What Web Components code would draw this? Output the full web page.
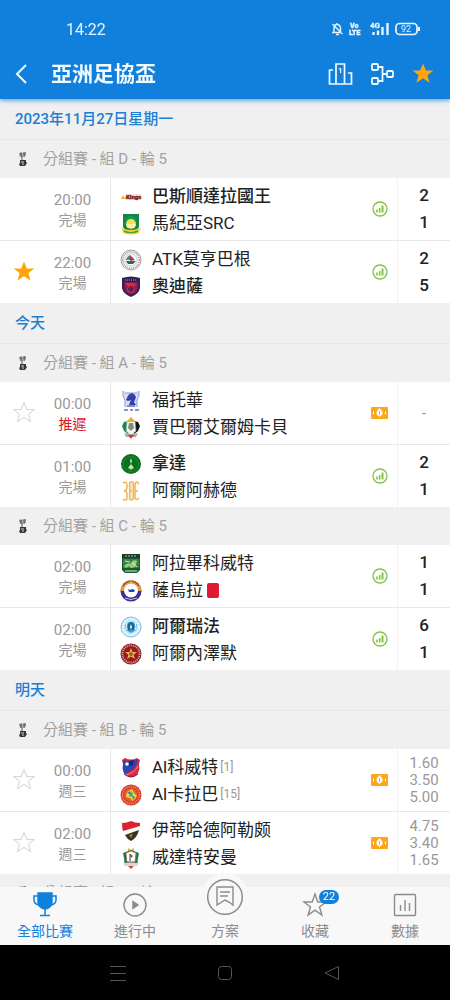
<!DOCTYPE html>
<html lang="zh-Hant">
<head>
<meta charset="utf-8">
<meta name="viewport" content="width=device-width, initial-scale=1">
<title>亞洲足協盃</title>
<style>
  html, body { height: 100%; }
  body {
    margin: 0;
    background: #000;
    font-family: Roboto, "Noto Sans CJK TC", sans-serif;
    --brand-color: #1180dc;
    --surface-color: #f0f0f0;
    --line-color: #e8e8e8;
    --text-color: #222;
    --muted-color: #999;
    --star-color: #ffa40d;
  }
</style>
</head>
<body>
<cup-app>
  <status-bar slot="top" time="14:22" battery="92"></status-bar>
  <page-header slot="top">亞洲足協盃</page-header>

  <date-heading>2023年11月27日星期一</date-heading>
  <group-heading>分組賽 - 組 D - 輪 5</group-heading>
  <match-row time="20:00" state="完場" icon="stats">
    <team-line crest="kings" winner>巴斯順達拉國王</team-line>
    <team-line crest="maziya">馬紀亞SRC</team-line>
    <score-line slot="score">2</score-line>
    <score-line slot="score">1</score-line>
  </match-row>
  <match-row time="22:00" state="完場" icon="stats" star="on">
    <team-line crest="bagan">ATK莫亨巴根</team-line>
    <team-line crest="odisha" winner>奧迪薩</team-line>
    <score-line slot="score">2</score-line>
    <score-line slot="score">5</score-line>
  </match-row>

  <date-heading>今天</date-heading>
  <group-heading>分組賽 - 組 A - 輪 5</group-heading>
  <match-row time="00:00" state="推遲" icon="ticket" star="off" late>
    <team-line crest="fotouh">福托華</team-line>
    <team-line crest="jabal">賈巴爾艾爾姆卡貝</team-line>
    <score-line slot="score" kind="none">-</score-line>
  </match-row>
  <match-row time="01:00" state="完場" icon="stats">
    <team-line crest="nahda" winner>拿達</team-line>
    <team-line crest="ahed">阿爾阿赫德</team-line>
    <score-line slot="score">2</score-line>
    <score-line slot="score">1</score-line>
  </match-row>

  <group-heading>分組賽 - 組 C - 輪 5</group-heading>
  <match-row time="02:00" state="完場" icon="stats">
    <team-line crest="arabi">阿拉畢科威特</team-line>
    <team-line crest="zawraa" red-card>薩烏拉</team-line>
    <score-line slot="score">1</score-line>
    <score-line slot="score">1</score-line>
  </match-row>
  <match-row time="02:00" state="完場" icon="stats">
    <team-line crest="riffa" winner>阿爾瑞法</team-line>
    <team-line crest="nejmeh">阿爾內澤默</team-line>
    <score-line slot="score">6</score-line>
    <score-line slot="score">1</score-line>
  </match-row>

  <date-heading>明天</date-heading>
  <group-heading>分組賽 - 組 B - 輪 5</group-heading>
  <match-row time="00:00" state="週三" icon="ticket" star="off">
    <team-line crest="kuwait" rank="1">Al科威特</team-line>
    <team-line crest="kahrabaa" rank="15">Al卡拉巴</team-line>
    <score-line slot="score" kind="odds">1.60</score-line>
    <score-line slot="score" kind="odds">3.50</score-line>
    <score-line slot="score" kind="odds">5.00</score-line>
  </match-row>
  <match-row time="02:00" state="週三" icon="ticket" star="off">
    <team-line crest="ittihad">伊蒂哈德阿勒颇</team-line>
    <team-line crest="wehdat">威達特安曼</team-line>
    <score-line slot="score" kind="odds">4.75</score-line>
    <score-line slot="score" kind="odds">3.40</score-line>
    <score-line slot="score" kind="odds">1.65</score-line>
  </match-row>
  <group-heading>分組賽 - 組 A - 輪 5</group-heading>

  <tab-bar slot="bottom">
    <tab-item icon="cup" active>全部比賽</tab-item>
    <tab-item icon="play">進行中</tab-item>
    <tab-item icon="plan" raised>方案</tab-item>
    <tab-item icon="star" badge="22">收藏</tab-item>
    <tab-item icon="data">數據</tab-item>
  </tab-bar>
  <system-nav slot="bottom"></system-nav>
</cup-app>

<script>
const STAR_PATH = 'M12 1.6l2.9 7h7.5l-6 4.7 2.2 7.5L12 16.3l-6.6 4.5 2.2-7.5-6-4.7h7.5z';

// 22x22 club crests
const CRESTS = {
  kings: `
    <path d="M1 13l2-4 2 4zM4 13l2-3 1 3z" fill="#f2b233"/>
    <rect x="7" y="8" width="14" height="6" fill="#f6e4dc"/>
    <text x="6" y="13" font-size="6" font-weight="900" font-family="Roboto" fill="#7b1c1c" stroke="#7b1c1c" stroke-width=".3">Kings</text>`,
  maziya: `
    <path d="M3 1h16v13l-3 4H6l-3-4z" fill="#16834a"/>
    <path d="M5 6l3-2 3-2 3 2 3 2-1 4H6z" fill="#0f9b52"/>
    <circle cx="11" cy="11" r="5" fill="#f3e04d"/>
    <path d="M6 12h10M7 14h8" stroke="#fff" stroke-width="1"/>
    <path d="M1 14c5 4 15 4 20 0l-2 6c-5 2-11 2-16 0z" fill="#f1d63c"/>
    <path d="M4 18c4 2 10 2 14 0" stroke="#4a9a3f" stroke-width="1.4" fill="none"/>`,
  bagan: `
    <circle cx="11" cy="11" r="10" fill="#f7f3f3" stroke="#aaa1a6" stroke-width="1"/>
    <circle cx="11" cy="11" r="8.2" fill="none" stroke="#bb8e98" stroke-width="1.6" stroke-dasharray="1 1"/>
    <circle cx="11" cy="11" r="6" fill="#fff" stroke="#9dbfb7" stroke-width=".6"/>
    <path d="M6 12h10l-3 3H8z" fill="#12706a"/>
    <path d="M10 12V6l5 5z" fill="#a73844"/>
    <path d="M6 11c1-3 2-4 4-5v5z" fill="#438c82"/>`,
  odisha: `
    <path d="M2 2q9-3 18 0v10q-1 6-9 9Q3 18 2 12z" fill="#321f5b"/>
    <path d="M4 6h14v6q-1 5-7 7-6-2-7-7z" fill="#782056"/>
    <path d="M5 4h12" stroke="#a6a0c4" stroke-width="1" stroke-dasharray="1 1"/>
    <path d="M5 7h6l6 1-2 2H7z" fill="#e12b35"/>
    <circle cx="11" cy="13" r="3.4" fill="none" stroke="#d62a3b" stroke-width="1.2"/>
    <path d="M11 10v6M8 13h6" stroke="#243177" stroke-width="1"/>`,
  fotouh: `
    <path d="M3 1h2l1 2h10l1-2h2v4l-2 6v6H5v-6L3 5z" fill="#d9def3"/>
    <path d="M3 1v5l2 4v7M19 1v5l-2 4v7M5 3h12" stroke="#8e9bd5" fill="none"/>
    <path d="M7 8q1-4 5-5 3 1 4 4l-1 3-1 2 2 3H9l1-3 1-2-3 1-2-1z" fill="#3143a8"/>
    <path d="M7 16h8M4 20h4m2 0h3m2 0h4" stroke="#6373bd" stroke-width="1.4"/>`,
  jabal: `
    <path d="M4 5L8 4v13l-4-3-2-5z" fill="#15894f"/>
    <path d="M18 5l-4-1v13l4-3 2-5z" fill="#111"/>
    <path d="M7 4q4-3 8 0l1 10-5 4-5-4z" fill="#f8f8f2" stroke="#8b9b8f" stroke-width=".7"/>
    <path d="M8 3l3-3 3 3v2H8z" fill="#e6b13b"/>
    <path d="M9 6h4l1 5-3 3-3-3z" fill="#7e8e7b"/>
    <path d="M4 16l3 1h8l3-1-2 4H6z" fill="#a8aaa5"/>
    <path d="M8 18h6l-3 4z" fill="#d93636"/>`,
  nahda: `
    <circle cx="11" cy="11" r="10" fill="#08711e"/>
    <circle cx="11" cy="11" r="7.5" fill="none" stroke="#4c9a4b" stroke-width="1" stroke-dasharray="1 1"/>
    <path d="M11 5l1 3-1 3 3 4H8l3-4-1-3z" fill="#d6e3b4"/>
    <path d="M8 15h6l-3 2z" fill="#a9c777"/>`,
  ahed: `
    <path d="M3 3q4-2 4 2v3q0 2-3 3 3 0 3 3v5q-2 2-4 0" fill="none" stroke="#efb650" stroke-width="1.500"/>
    <path d="M9.500 2.500q3-2 4 1v14q-1 4-4 2V13q0-2 2-2-2 0-2-2z" fill="#fbe3b2" stroke="#efb650" stroke-width="1.300"/>
    <path d="M19 4q-3-4-4 0v14q1 3 4 0M15 11h3" fill="none" stroke="#efb650" stroke-width="1.500"/>`,
  arabi: `
    <path d="M2 1h18v16l-3 3H5l-3-3z" fill="#175a35"/>
    <path d="M2 1h18v4H2z" fill="#203c29"/>
    <path d="M5 3h12" stroke="#b0bf9b" stroke-dasharray="2 1"/>
    <path d="M3 6h16v9H3z" fill="#38834b"/>
    <path d="M4 13l4-3 2 1 4-4 3 1-2 6-4 1-2-2-3 2z" fill="#9bd06d"/>
    <path d="M5 8l5 1M12 9l5 5M5 18h12" stroke="#dceac3" stroke-width="1"/>`,
  zawraa: `
    <circle cx="11" cy="11" r="10.500" fill="#3d2d94"/>
    <path d="M.5 11a10.500 10.500 0 0 1 21 0z" fill="#dc9c3f"/>
    <path d="M3 6a10 10 0 0 1 7-5M12 1a10 10 0 0 1 7 5" stroke="#a9522d" fill="none" stroke-width="1.4"/>
    <circle cx="11" cy="10.500" r="7" fill="#fff"/>
    <path d="M8 9l2 1 2-1 3 1-1 2H9z" fill="#1b4ab4"/>
    <path d="M5 18q6 3 12 0" stroke="#c8c2ef" fill="none"/>`,
  riffa: `
    <circle cx="11" cy="11" r="10" fill="#bfe4f5" stroke="#84c1e3" stroke-width="1"/>
    <circle cx="11" cy="11" r="8" fill="none" stroke="#f4fbff" stroke-width="2" stroke-dasharray="2 1"/>
    <path d="M5 9l4-3h4l4 3-1 5-5 3-5-3z" fill="#3b9bd1"/>
    <path d="M8 8l3-2 3 2v6H8z" fill="#186596"/>
    <path d="M7 7q-2 4 0 7M15 7q2 4 0 7" stroke="#fff" fill="none"/>
    <path d="M11 8l1 3-1 3-1-3z" fill="#e4f4fa"/>`,
  nejmeh: `
    <circle cx="11" cy="11" r="10.500" fill="#901e25"/>
    <circle cx="11" cy="11" r="8.600" fill="none" stroke="#ddb9a0" stroke-width="1.8" stroke-dasharray="1 1"/>
    <circle cx="11" cy="11" r="6.7" fill="#9a1920"/>
    <path d="M11 5l1.5 4H17l-3.4 2.7L15 16l-4-2.6L7 16l1.4-4.3L5 9h4.500z" fill="#e8b64a"/>
    <circle cx="11" cy="11" r="2" fill="#9f6029"/>`,
  kuwait: `
    <path d="M2 3l3-2q6 3 12 0l3 2-1 4q1 5-1 9-2 3-7 4-5-1-7-4-2-4-1-9z" fill="#df243b"/>
    <path d="M3 3q8 3 15-1-1 9-8 12l-5 3q-3-3-2-9z" fill="#2846b6"/>
    <path d="M9 4l5-1-1 5-4 1z" fill="#182878"/>
    <circle cx="7" cy="7" r="1.800" fill="#fff"/>
    <path d="M5 18q9-1 13-9" stroke="#f08a91" fill="none"/>
    <path d="M4 17q7 6 14 0" stroke="#7c1b34" fill="none"/>`,
  kahrabaa: `
    <circle cx="11" cy="11" r="10.500" fill="#d84232"/>
    <circle cx="11" cy="11" r="8.500" fill="none" stroke="#f19862" stroke-width="1.3" stroke-dasharray="1 1"/>
    <circle cx="11" cy="11" r="6.400" fill="#e1632f"/>
    <path d="M7 8l5-3 2 4 3 3-4 5-3-3-4-1z" fill="#f0d33d"/>
    <path d="M7 9l3-2 1 4zM12 11l3 2-2 3z" fill="#278fc0"/>
    <path d="M11 7l2 3-2 3-2-1z" fill="#56a34c"/>`,
  ittihad: `
    <path d="M2 3q5 0 9-2 4 2 9 2v7q-2 8-9 11Q4 18 2 10z" fill="#fbfaf5"/>
    <path d="M2 3q5 0 9-2 4 2 9 2v3L3 11q-1-3-1-8z" fill="#d92330"/>
    <path d="M5 15l14-5q-2 8-8 11-4-2-6-6z" fill="#37351f"/>
    <path d="M9 15l4-1-2 4z" fill="#a98b3d"/>`,
  wehdat: `
    <path d="M8 1l3 2 3-2v4H8z" fill="#e9ae4b"/>
    <path d="M3 6l8-3 8 3-2 11H5z" fill="#14814a"/>
    <path d="M6 6l5-2 5 2-1 10H7z" fill="#fff" stroke="#af5353" stroke-width=".7"/>
    <path d="M10 7l3 2-2 2z" fill="#cd2630"/>
    <path d="M10 7v7" stroke="#333"/>
    <path d="M3 16h16l-2 3H5z" fill="#d6d8d5"/>
    <path d="M4 15h14" stroke="#4e6657"/>
    <path d="M8 19h6l-3 3z" fill="#dc4242"/>`
};

class BaseElement extends HTMLElement {
  connectedCallback() {
    if (!this.shadowRoot) {
      this.attachShadow({ mode: 'open' });
    }
    this.shadowRoot.innerHTML = this.render();
  }
}

class CupApp extends BaseElement {
  render() {
    return `
      <style>
        :host {
          display: flex;
          flex-direction: column;
          height: 100vh;
        }
        header {
          position: relative;
          z-index: 1;
          background: var(--brand-color);
          box-shadow: 0 2px 4px rgba(17, 128, 220, 0.6);
        }
        main {
          flex: 1;
          min-height: 0;
          overflow: hidden auto;
          scrollbar-width: none;
          background: var(--surface-color);
        }
      </style>
      <header><slot name="top"></slot></header>
      <main><slot></slot></main>
      <slot name="bottom"></slot>
    `;
  }
}

class StatusBar extends BaseElement {
  render() {
    return `
      <style>
        :host {
          display: flex;
          align-items: center;
          justify-content: space-between;
          height: 42px;
          padding: 8px 28px 0 66px;
          color: #e4f5ff;
          font-size: 16px;
        }
        svg { display: block; }
        text { font-family: Roboto, sans-serif; fill: currentColor; }
      </style>
      <span>${this.getAttribute('time')}</span>
      <svg width="92" height="16" viewBox="0 0 92 16" fill="none" stroke="currentColor">
        <g stroke-width="1.400">
          <path d="M2 11.500h9.500M4 11V7q0-3.500 3-3.500T10.500 7v4M7 3.500V2M6 13.500h3M2.500 3l10 10"/>
        </g>
        <g stroke-width=".3">
          <text x="20" y="7" font-size="7" font-weight="900">Vo</text>
          <text x="19" y="14" font-size="7" font-weight="900" font-family="Roboto">LTE</text>
          <text x="40" y="7" font-size="8" font-weight="700">4G</text>
        </g>
        <path d="M43.500 14v-3M48 14V9.500M52.500 14V6M57.500 14V2" stroke-width="2.400"/>
        <rect x="66" y="2.500" width="21" height="11" rx="3.500" stroke-width="1.700"/>
        <path d="M89 6v4" stroke-width="2"/>
        <text x="71" y="11" font-size="9" stroke="none">${this.getAttribute('battery')}</text>
      </svg>
    `;
  }
}

class PageHeader extends BaseElement {
  render() {
    return `
      <style>
        :host {
          display: flex;
          align-items: center;
          height: 47px;
          padding: 0 15px 2px 10px;
          color: #f0faff;
        }
        h1 {
          flex: 1;
          margin: 0 0 0 17px;
          font-size: 21px;
          line-height: 32px;
          font-weight: 700;
        }
        button {
          display: block;
          padding: 0;
          border: 0;
          background: none;
          color: inherit;
        }
        svg { display: block; }
        nav { display: flex; gap: 16px; }
        text { font-family: Roboto, sans-serif; }
      </style>
      <button aria-label="返回">
        <svg width="24" height="24" viewBox="0 0 24 24" fill="none" stroke="currentColor" stroke-width="2"><path d="M16 3l-9 9 9 9"/></svg>
      </button>
      <h1><slot></slot></h1>
      <nav>
        <button aria-label="積分榜">
          <svg width="26" height="24" viewBox="0 0 26 24" fill="none" stroke="currentColor" stroke-width="1.700">
            <path d="M9 22V2h8.500v20M6 8H2.500v14h22V11H21"/>
            <text x="11" y="11" font-size="8" font-weight="700" fill="currentColor" stroke="none">1</text>
          </svg>
        </button>
        <button aria-label="淘汰賽">
          <svg width="26" height="24" viewBox="0 0 26 24" fill="none" stroke="currentColor" stroke-width="1.800">
            <rect x="3" y="2" width="6" height="6" rx="1"/>
            <rect x="3" y="16" width="6" height="6" rx="1"/>
            <rect x="18" y="9" width="6" height="6" rx="1"/>
            <path d="M9 5h4.500v14H9M13.500 12H18"/>
          </svg>
        </button>
        <button aria-label="收藏聯賽">
          <svg width="24" height="24" viewBox="0 0 24 24"><path d="${STAR_PATH}" fill="var(--star-color)"/></svg>
        </button>
      </nav>
    `;
  }
}

class DateHeading extends BaseElement {
  render() {
    return `
      <style>
        :host {
          display: block;
          border-bottom: 1px solid var(--line-color);
          color: #1b7fd4;
        }
        h2 {
          margin: 0;
          padding: 1px 15px 0;
          font-size: 15px;
          line-height: 39px;
          font-weight: 500;
        }
      </style>
      <h2><slot></slot></h2>
    `;
  }
}

class GroupHeading extends BaseElement {
  render() {
    return `
      <style>
        :host {
          display: flex;
          align-items: center;
          gap: 13px;
          padding-left: 16px;
          color: #a2a2a2;
        }
        h3 {
          margin: 0;
          font-size: 15px;
          line-height: 38px;
          font-weight: 400;
        }
      </style>
      <svg width="14" height="16" viewBox="0 0 14 16" aria-hidden="true">
        <path d="M3 2l3-1v5H4zM7 1h3v3L8 6z" fill="#8d8d8d"/>
        <path d="M4 3h5M5 5h4M6 6v4" stroke="#555" stroke-width="1"/>
        <path d="M4 9h6v2l1 1-2 3H4l-1-2 1-1z" fill="#383838"/>
        <path d="M5 11h3M6 13h2" stroke="#d5d5d5" stroke-width="1"/>
      </svg>
      <h3><slot></slot></h3>
    `;
  }
}

class MatchRow extends BaseElement {
  render() {
    const star = this.getAttribute('star');
    const starFill = star === 'on' ? 'var(--star-color)' : 'none';
    const starStroke = star === 'on' ? 'none' : '#d2d2d2';
    const icon = this.getAttribute('icon') === 'stats'
      ? `<svg width="16" height="16" viewBox="0 0 16 16" role="img" aria-label="統計" fill="none" stroke="#83c341">
          <circle cx="8" cy="8" r="7" stroke-width="1.300"/>
          <path d="M5 11.500v-3M7.700 11.500V7" stroke-width="1.600"/>
          <path d="M10.500 11.500v-7" stroke-width="2"/>
        </svg>`
      : `<svg width="17" height="12" viewBox="0 0 17 12" role="img" aria-label="賠率">
          <rect width="17" height="12" rx="1" fill="#fba61c"/>
          <path d="M8.500 1l2 2.500-2 7.500-2-7.500z" fill="#fff"/>
          <circle cx="8.500" cy="6" r="3" fill="#fff"/>
          <path d="M8.500 4v4" stroke="#fba61c"/>
          <path d="M2.500 4.500v3M14.500 4.500v3" stroke="#fff" stroke-width="1"/>
        </svg>`;
    return `
      <style>
        :host {
          display: grid;
          grid-template-columns: 48px 63px 1fr 34px 53px;
          height: 62px;
          background: #fff;
        }
        .star, .icon {
          display: flex;
          align-items: center;
          justify-content: center;
        }
        .icon { padding-right: 1px; }
        button {
          padding: 0;
          border: 0;
          background: none;
        }
        svg { display: block; }
        .info {
          display: flex;
          flex-direction: column;
          justify-content: center;
          padding: 2px 13px 0 0;
          border-right: 1px solid var(--line-color);
          color: var(--muted-color);
          font-size: 15px;
          line-height: 20px;
          text-align: center;
        }
        .state { font-size: 14px; }
        .late { color: #e0142e; }
        .teams {
          display: flex;
          flex-direction: column;
          justify-content: center;
          padding: 2px 0 0 9px;
          min-width: 0;
        }
        .score {
          display: flex;
          flex-direction: column;
          justify-content: center;
          border-left: 1px solid #f2f2f2;
          text-align: center;
        }
      </style>
      <div class="star">
        ${star ? `<button aria-label="收藏" aria-pressed="${star === 'on'}">
          <svg width="24" height="24" viewBox="0 0 24 24"><path d="${STAR_PATH}" fill="${starFill}" stroke="${starStroke}" stroke-width="1"/></svg>
        </button>` : ''}
      </div>
      <div class="info">
        <time>${this.getAttribute('time')}</time>
        <span class="state ${this.hasAttribute('late') ? 'late' : ''}">${this.getAttribute('state')}</span>
      </div>
      <div class="teams"><slot></slot></div>
      <div class="icon">${icon}</div>
      <div class="score"><slot name="score"></slot></div>
    `;
  }
}

class TeamLine extends BaseElement {
  render() {
    const rank = this.getAttribute('rank');
    return `
      <style>
        :host {
          display: flex;
          align-items: center;
          height: 27px;
          color: var(--text-color);
          font-size: 17px;
          line-height: 27px;
          white-space: nowrap;
        }
        :host([winner]) { font-weight: 500; }
        svg { margin-right: 10px; }
        .rank {
          margin-left: 2px;
          color: var(--muted-color);
          font-size: 12px;
        }
        .card {
          width: 12px;
          height: 15px;
          margin-left: 4px;
          border-radius: 2px;
          background: #e01a32;
        }
      </style>
      <svg width="22" height="22" viewBox="0 0 22 22" aria-hidden="true">${CRESTS[this.getAttribute('crest')]}</svg>
      <span><slot></slot></span>
      ${rank ? `<span class="rank">[${rank}]</span>` : ''}
      ${this.hasAttribute('red-card') ? '<span class="card" role="img" aria-label="紅牌"></span>' : ''}
    `;
  }
}

class ScoreLine extends BaseElement {
  render() {
    return `
      <style>
        :host {
          display: block;
          color: var(--text-color);
          font-size: 17px;
          line-height: 27px;
          font-weight: 500;
        }
        :host([kind]) {
          color: var(--muted-color);
          font-size: 15px;
          line-height: 17px;
          font-weight: 400;
        }
      </style>
      <slot></slot>
    `;
  }
}

const TAB_ICONS = {
  cup: `<path d="M7 2h14v10q-1 5-7 6-6-1-7-6z" fill="currentColor"/>
    <path d="M7 5H3v4q0 4 5 5M21 5h4v4q0 4-5 5M14 17v7M9 24.500h10" stroke-width="1.500"/>`,
  play: `<circle cx="14" cy="14" r="11"/><path d="M12 10.500l5 3.500-5 3.500z" fill="currentColor"/>`,
  plan: `<circle cx="19" cy="19" r="17.300" stroke-width="1.500"/>
    <path d="M11 9h16v18l-4-3-4-2-8 5z"/><path d="M14 14h10M14 18h8"/>`,
  star: `<path d="M14 3l2.800 8h8.200l-6.500 5 2.400 8-6.900-4.800L7.100 24l2.400-8L3 11h8.200z"/>`,
  data: `<rect x="3.500" y="3.500" width="21" height="21" rx="1"/><path d="M9.500 14v6M14 9v11M18.500 12v8"/>`
};

class TabBar extends BaseElement {
  render() {
    return `
      <style>
        :host { display: block; position: relative; background: #f8f8f8; }
        nav {
          display: grid;
          grid-template-columns: repeat(5, 1fr);
          height: 58px;
        }
      </style>
      <nav><slot></slot></nav>
    `;
  }
}

class TabItem extends BaseElement {
  render() {
    const badge = this.getAttribute('badge');
    const size = this.hasAttribute('raised') ? 38 : 28;
    return `
      <style>
        :host { display: block; color: #8c8c8c; }
        :host([active]) { color: var(--brand-color); }
        a {
          display: flex;
          flex-direction: column;
          align-items: center;
          justify-content: flex-end;
          height: 54px;
          color: inherit;
          font-size: 14px;
          line-height: 20px;
          text-decoration: none;
        }
        .icon {
          position: relative;
          padding-bottom: 2px;
        }
        /* the middle tab sticks out above the bar */
        :host([raised]) .icon {
          padding: 5px;
          border-radius: 50%;
          background: #f8f8f8;
        }
        svg { display: block; }
        .badge {
          position: absolute;
          top: -1px;
          left: 18px;
          min-width: 20px;
          border-radius: 8px;
          background: var(--brand-color);
          color: #fff;
          font-size: 11px;
          line-height: 14px;
          text-align: center;
        }
      </style>
      <a href="#">
        <span class="icon">
          <svg width="${size}" height="${size}" viewBox="0 0 ${size} ${size}" fill="none" stroke="currentColor" stroke-width="1.400">${TAB_ICONS[this.getAttribute('icon')]}</svg>
          ${badge ? `<span class="badge">${badge}</span>` : ''}
        </span>
        <span><slot></slot></span>
      </a>
    `;
  }
}

class SystemNav extends BaseElement {
  render() {
    return `
      <style>
        :host {
          display: flex;
          align-items: center;
          justify-content: center;
          gap: 89px;
          height: 55px;
          background: #000;
        }
        button {
          padding: 0;
          border: 0;
          background: none;
          color: #555;
        }
        svg { display: block; }
      </style>
      <button aria-label="選單"><svg width="18" height="18" viewBox="0 0 18 18" fill="none" stroke="currentColor"><path d="M1 2.500h16M1 9.500h16M1 16.500h16"/></svg></button>
      <button aria-label="主頁"><svg width="18" height="18" viewBox="0 0 18 18" fill="none" stroke="currentColor"><rect x="2.500" y="2.500" width="13" height="13" rx="3"/></svg></button>
      <button aria-label="返回"><svg width="18" height="18" viewBox="0 0 18 18" fill="none" stroke="currentColor"><path d="M15.500 2.500v13L2 9z" stroke-linejoin="round"/></svg></button>
    `;
  }
}

// a thin line splits two matches that follow each other
document.querySelectorAll('match-row + match-row').forEach((row) => {
  row.style.borderTop = '1px solid var(--line-color)';
});

customElements.define('cup-app', CupApp);
customElements.define('status-bar', StatusBar);
customElements.define('page-header', PageHeader);
customElements.define('date-heading', DateHeading);
customElements.define('group-heading', GroupHeading);
customElements.define('match-row', MatchRow);
customElements.define('team-line', TeamLine);
customElements.define('score-line', ScoreLine);
customElements.define('tab-bar', TabBar);
customElements.define('tab-item', TabItem);
customElements.define('system-nav', SystemNav);
</script>
</body>
</html>
